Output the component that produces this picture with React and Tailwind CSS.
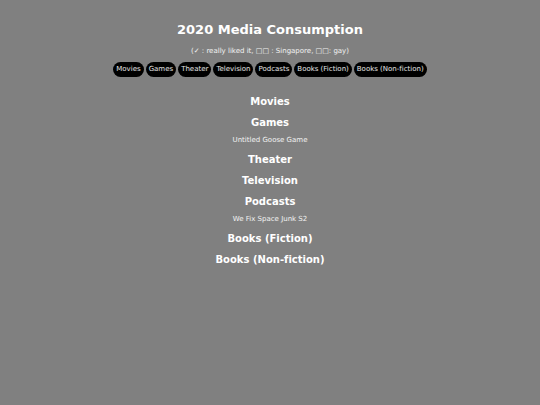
const sections = [
  { id: 'movies', name: 'Movies', items: [] },
  { id: 'games', name: 'Games', items: ['Untitled Goose Game'] },
  { id: 'theater', name: 'Theater', items: [] },
  { id: 'television', name: 'Television', items: [] },
  { id: 'podcasts', name: 'Podcasts', items: ['We Fix Space Junk S2'] },
  { id: 'fiction', name: 'Books (Fiction)', items: [] },
  { id: 'nonfiction', name: 'Books (Non-fiction)', items: [] },
];

export default function App() {
  return (
    <div className="min-h-screen bg-[#808080] px-4 pt-5 pb-8 text-center text-[7px] leading-[9px] text-white [font-variant-ligatures:none] font-['DejaVu_Sans',sans-serif]">
      <header>
        <h1 className="text-[13px] leading-5 font-bold">2020 Media Consumption</h1>
        {/* Legend */}
        <p className="mt-[7px] text-white/90">(✓ : really liked it, □□ : Singapore, □□: gay)</p>
        <nav className="mt-[6px] flex flex-wrap justify-center gap-[2px]">
          {sections.map((section) => (
            <a key={section.id} href={`#${section.id}`} className="rounded-full bg-black p-[3px] text-white/90">
              {section.name}
            </a>
          ))}
        </nav>
      </header>
      <main className="mt-[18px] flex flex-col gap-2">
        {sections.map((section) => (
          <section key={section.id} id={section.id}>
            <h2 className="text-[10px] leading-[13px] font-bold">{section.name}</h2>
            {section.items.map((item) => (
              <p key={item} className="mt-[7px] text-white/90">{item}</p>
            ))}
          </section>
        ))}
      </main>
    </div>
  );
}
